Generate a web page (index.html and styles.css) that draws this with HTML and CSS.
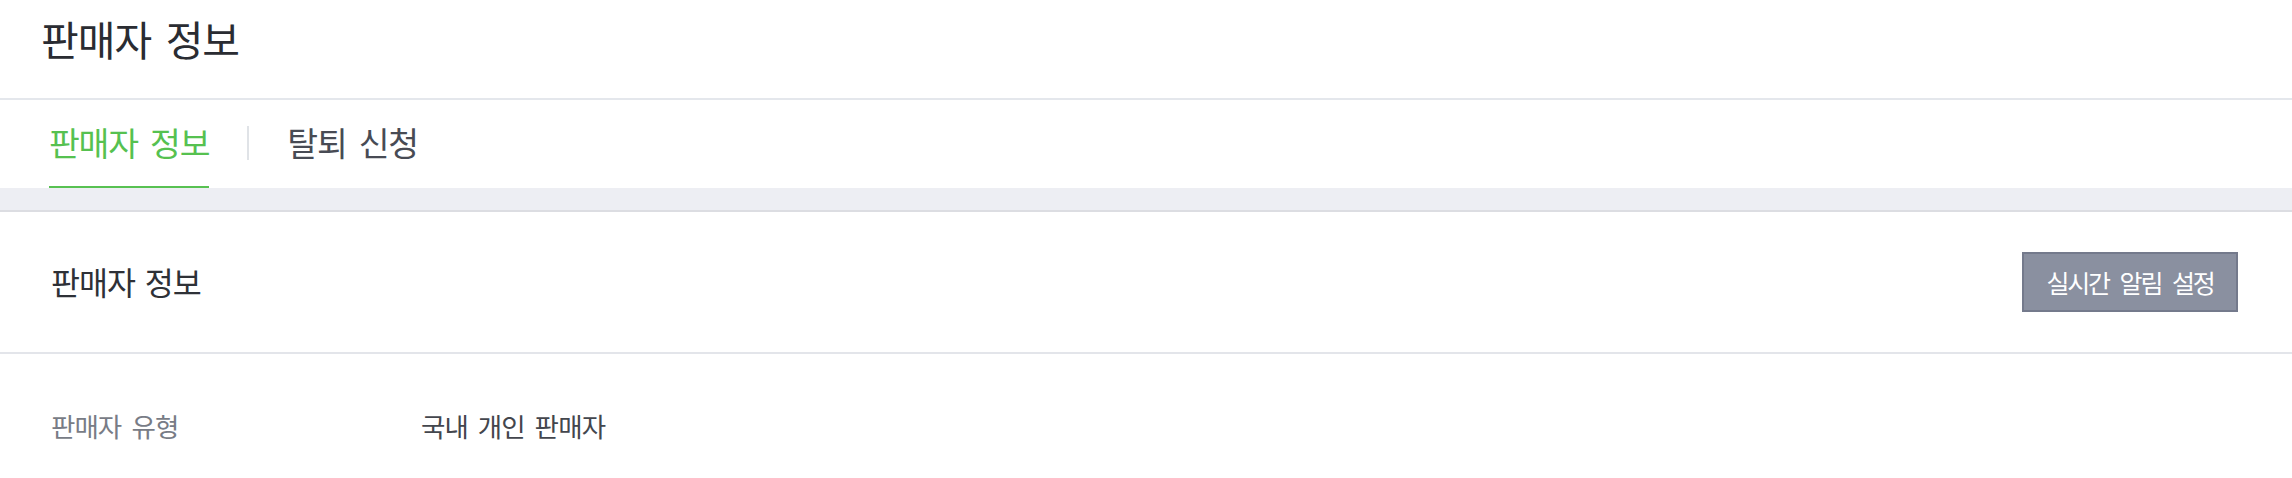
FILE: index.html
```html
<!DOCTYPE html>
<html lang="ko">
<head>
<meta charset="utf-8">
<title>판매자 정보</title>
<link rel="stylesheet" href="styles.css">
</head>
<body>
<div class="page">
  <header class="page-header">
    <h1 class="page-title">판매자 정보</h1>
  </header>
  <nav class="tabs">
    <a class="tab tab-active">판매자 정보</a>
    <span class="tab-sep"></span>
    <a class="tab">탈퇴 신청</a>
  </nav>
  <div class="band"></div>
  <section class="panel">
    <div class="panel-head">
      <h2 class="panel-title">판매자 정보</h2>
      <button class="btn-alarm">실시간 알림 설정</button>
    </div>
    <div class="info-row">
      <div class="info-label">판매자 유형</div>
      <div class="info-value">국내 개인 판매자</div>
    </div>
  </section>
</div>
</body>
</html>
```

FILE: styles.css
```css
html, body {
  margin: 0;
  padding: 0;
  background: #ffffff;
}
body {
  font-family: "Noto Sans CJK KR", "Noto Sans", sans-serif;
  overflow: hidden;
}
.page {
  width: 100%;
}
.page-header {
  height: 86px;
  padding: 12px 41px 0;
  border-bottom: 2px solid #e4e7ec;
}
.page-title {
  margin: 0;
  font-size: 41px;
  line-height: 52px;
  font-weight: 400;
  color: #2a2c32;
  letter-spacing: -1px;
  word-spacing: 4px;
}
.tabs {
  display: flex;
  align-items: flex-start;
  gap: 38px;
  padding: 0 49px;
  height: 88px;
}
.tab {
  display: block;
  padding: 20px 0 22px;
  font-size: 33.5px;
  line-height: 44px;
  letter-spacing: -1.2px;
  word-spacing: 4px;
  color: #484b54;
  border-bottom: 2px solid transparent;
  cursor: pointer;
}
.tab-active {
  color: #56c150;
  border-bottom-color: #58c152;
}
.tab-sep {
  width: 2px;
  height: 34px;
  margin-top: 26px;
  background: #e0e3e7;
}
.band {
  height: 22px;
  background: #edeef3;
  border-bottom: 2px solid #dcdde2;
}
.panel-head {
  display: flex;
  align-items: center;
  justify-content: space-between;
  height: 140px;
  padding: 0 54px 0 51px;
  border-bottom: 2px solid #e3e5ea;
}
.panel-title {
  margin: 0 0 3px;
  font-size: 31.5px;
  line-height: 40px;
  font-weight: 400;
  color: #2e3137;
  letter-spacing: -1px;
  word-spacing: 2px;
}
.btn-alarm {
  width: 216px;
  height: 60px;
  box-sizing: border-box;
  border: 2px solid #747a8c;
  background: #8a90a0;
  color: #ffffff;
  font-family: "Noto Sans CJK KR", "Noto Sans", sans-serif;
  font-size: 25px;
  letter-spacing: -2.2px;
  word-spacing: 6px;
  padding: 0;
  border-radius: 0;
  cursor: pointer;
}
.info-row {
  display: grid;
  grid-template-columns: 370px 1fr;
  padding: 50px 51px 0 51px;
}
.info-label {
  font-size: 26.5px;
  line-height: 44px;
  letter-spacing: -1px;
  word-spacing: 4px;
  color: #787c86;
}
.info-value {
  font-size: 26.5px;
  line-height: 44px;
  letter-spacing: -0.8px;
  word-spacing: 3px;
  color: #43464d;
}
```
